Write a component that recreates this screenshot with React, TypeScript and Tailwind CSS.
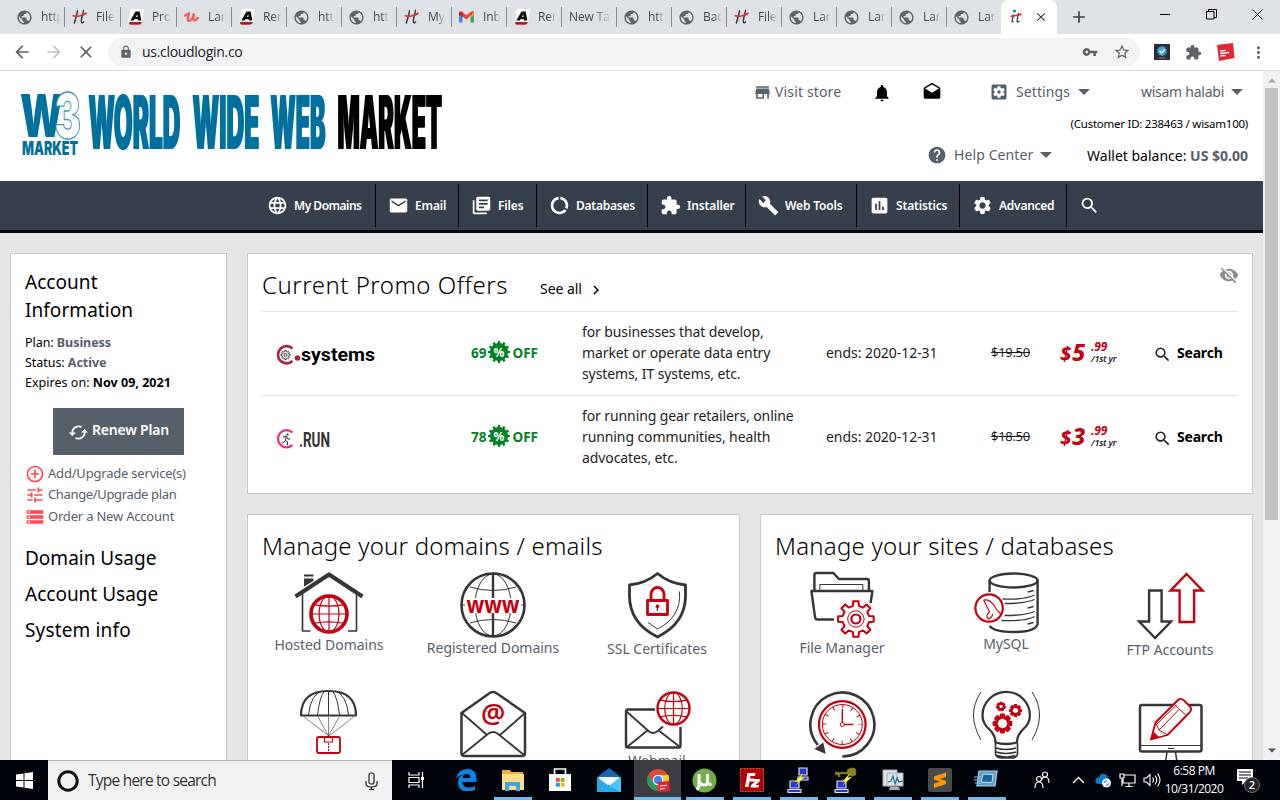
import type { ReactNode } from "react";
import {
  MdArrowBack, MdArrowForward, MdClose, MdLock, MdVpnKey, MdStarBorder, MdMoreVert, MdExtension, MdPublic, MdAdd,
  MdLanguage, MdEmail, MdLibraryBooks, MdDataUsage, MdBuild, MdAssessment, MdSettings, MdSearch, MdStore,
  MdNotifications, MdDrafts, MdSettingsApplications, MdHelp, MdVisibilityOff, MdControlPoint, MdTune, MdStorage,
  MdCached, MdChevronRight,
} from "react-icons/md";

const INK = "#363636";
const RED = "#c4000f";

/* ---------- shared drawing helpers ---------- */

function gearPath(cx: number, cy: number, outer: number, inner: number, teeth: number) {
  const step = (Math.PI * 2) / teeth;
  const pts: string[] = [];
  for (let i = 0; i < teeth; i++) {
    const a = i * step - Math.PI / 2;
    const at = (r: number, k: number) =>
      `${(cx + r * Math.cos(a + k * step)).toFixed(2)} ${(cy + r * Math.sin(a + k * step)).toFixed(2)}`;
    pts.push(at(inner, -0.28), at(outer, -0.19), at(outer, 0.19), at(inner, 0.28));
  }
  return "M" + pts.join("L") + "Z";
}

/* ---------- browser chrome ---------- */

function HLogo() {
  return (
    <svg width="15" height="16" viewBox="0 0 15 16" fill="none">
      <path d="M5 1.500c1 .2 0 3-.8 6S2.500 14 2 14.500M11 1c1 .5 0 3-.8 6s-1.200 6.500-.2 6.800 1.200-.6 1.800-1.500" stroke="#35363a" strokeWidth="1.500" />
      <path d="M.5 6.500c4 1.500 10 .5 14-2.500" stroke="#e8252f" strokeWidth="1.600" />
    </svg>
  );
}

function ALogo() {
  return (
    <svg width="16" height="16" viewBox="0 0 16 16">
      <path d="M3 0h12q1 0 .8 1l-1.800 11q-.3 3.500-3.500 3.500h-9q-1.500 0-1-2l2-12Q1.700 0 3 0Z" fill="#fff" />
      <path d="M1 13h12.800q-.5 2.700-3.300 2.700h-8Q1 15.700 1 13Z" fill="#b5121b" />
      <path fillRule="evenodd" d="M7.500 2.500h4.200l1.600 9h-3.500l-.2-1.400H6.700L5.900 11.500H2.300Zm1.800 2.700L7.800 8h1.700Z" fill="#0b0b0b" />
    </svg>
  );
}

function ULogo() {
  return (
    <svg width="15" height="15" viewBox="0 0 15 15" fill="none">
      <path d="M1 5.500c2.500-.5 3-2 4-2-.5 2.500-2.500 7.500 0 7.500 2.800 0 4.500-5.500 5-7.500-.7 3.500-1.500 6.500.3 7 1.200 0 2.500-1.200 3.400-2.500" stroke="#f0585c" strokeWidth="2.300" strokeLinecap="round" />
    </svg>
  );
}

function GmailLogo() {
  return (
    <svg width="15" height="12" viewBox="0 0 15 12">
      <path d="M0 2v9.500h3.500V5Z" fill="#4285f4" />
      <path d="M15 2v9.500h-3.500V5Z" fill="#34a853" />
      <path d="M11.500 2 15 1v2.500l-3.500 3Z" fill="#fbbc04" />
      <path d="M0 1.500C0 0 2 0 3 .8l4.500 3.500L12 .8c1-.8 3-.8 3 .7L7.500 8.500 0 3Z" fill="#ea4335" />
      <path d="M0 1.500V3.800l3.500 2.500V1Z" fill="#c5221f" />
    </svg>
  );
}

type Fav = "globe" | "h" | "a" | "u" | "gmail" | "none";
const TABS: [Fav, string][] = [
  ["globe", "http"], ["h", "File"], ["a", "Pro"], ["u", "Lar"], ["a", "Rer"], ["globe", "htt"], ["globe", "htt"], ["h", "My"],
  ["gmail", "Inb"], ["a", "Rer"], ["none", "New Tab"], ["globe", "htt"], ["globe", "Bac"], ["h", "File"], ["globe", "Lar"],
  ["globe", "Lar"], ["globe", "Lar"], ["globe", "Lar"],
];

function Favicon({ kind }: { kind: Fav }) {
  if (kind === "globe") return <MdPublic size={17} color="#5f6368" className="-ml-px" />;
  if (kind === "h") return <HLogo />;
  if (kind === "a") return <ALogo />;
  if (kind === "u") return <ULogo />;
  return <GmailLogo />;
}

function TabStrip() {
  return (
    <div className="flex h-[34px] items-end bg-[#dee1e6] pl-[10px]">
      {TABS.map(([kind, label], i) => (
        <div key={i} className={`flex h-[34px] shrink-0 items-center ${i === 1 || i === 2 ? "w-14" : "w-[55px]"}`}>
          <div className={`flex h-5 w-full items-center pl-[7px] ${i < 17 ? "border-r border-[#8a8d91]" : ""}`}>
            {kind !== "none" && <span className="flex w-[24px] shrink-0"><Favicon kind={kind} /></span>}
            <span className="mr-1 overflow-hidden whitespace-nowrap text-[12px] tracking-[-0.100px] text-[#45484d] [mask-image:linear-gradient(to_right,#000_55%,transparent)]">{label}</span>
          </div>
        </div>
      ))}
      <div className="-ml-px flex h-[34px] w-[56px] items-center rounded-t-lg bg-white pl-[9px]">
        <svg width="12" height="16" viewBox="0 0 12 16" fill="none">
          <circle cx="4.500" cy="2" r="1.500" fill="#1a73e8" />
          <path d="M3.500 5.500 2 12q0 1.500 1.500.5M8.500 4 7 12q0 2 2.500 0" stroke="#3c4043" strokeWidth="1.300" />
          <path d="M.5 7.500C4 6.500 8 7 11.500 5" stroke="#e8252f" strokeWidth="1.500" />
        </svg>
        <MdClose size={14} className="ml-[12px]" color="#3c4043" />
      </div>
      <div className="flex h-[34px] flex-1 items-center">
        <MdAdd size={20} className="ml-[12px]" color="#3c4043" />
        <span className="-mt-[5px] ml-[71px] h-px w-[10px] bg-black" />
        <svg className="ml-[36px] -mt-[6px]" width="11" height="11" viewBox="0 0 11 11" fill="none" stroke="#000">
          <path d="M.5 2.500h7.500v7.500H.5ZM2.500 2.500V.5h8v8H8" />
        </svg>
        <svg className="ml-[35px] -mt-[6px]" width="11" height="11" viewBox="0 0 11 11" stroke="#000"><path d="m.5.5 10 10M10.500.5l-10 10" /></svg>
      </div>
    </div>
  );
}

function Toolbar() {
  return (
    <div className="flex h-9 items-center bg-white">
      <MdArrowBack size={20} className="ml-[12px]" color="#5f6368" />
      <MdArrowForward size={20} className="ml-[12px]" color="#bdc1c6" />
      <MdClose size={20} className="ml-[12px]" color="#5f6368" />
      <div className="ml-[12px] flex h-7 w-[1032px] items-center rounded-full bg-[#f1f3f4]">
        <MdLock size={14} className="ml-[11px]" color="#5f6368" />
        <span className="ml-[9px] w-[940px] text-[14px] leading-5 tracking-[-0.300px] text-[#202124]">us.cloudlogin.co</span>
        <MdVpnKey size={16} color="#5f6368" />
        <MdStarBorder size={18} className="ml-[15px]" color="#5f6368" />
      </div>
      <svg className="ml-[14px]" width="16" height="16" viewBox="0 0 16 16">
        <rect width="16" height="16" fill="#2c3036" />
        <path d={gearPath(8, 7, 5, 4.5, 10)} fill="#3ba0dc" />
        <path d="m5.500 7 2 2 3-3.500" stroke="#fff" strokeWidth="1.300" fill="none" />
        <path d="M5 14h6" stroke="#888" />
      </svg>
      <MdExtension size={17} className="ml-[15px]" color="#5f6368" />
      <svg className="ml-[15px]" width="18" height="18" viewBox="0 0 18 18">
        <path d="m0 2 16-2 1.500 15L2 18Z" fill="#e2262f" />
        <path d="m3 8 6-.6M3.200 10.500l9-1M3.500 13l5-.5" stroke="#fff" strokeWidth="1.300" />
      </svg>
      <MdMoreVert size={19} className="ml-[14px]" color="#5f6368" />
    </div>
  );
}

/* ---------- site header ---------- */

function Brand() {
  return (
    <svg className="mt-[19px] ml-[18px] shrink-0" width="428" height="68" viewBox="18 90 428 68" fontFamily="Inter, Roboto, 'Liberation Sans', sans-serif" fontWeight="900">
      <g fill="#00709f">
        <text x="20" y="137" fontSize="59" textLength="43" lengthAdjust="spacingAndGlyphs">W</text>
        <text x="22" y="155" fontSize="19" textLength="56" lengthAdjust="spacingAndGlyphs">MARKET</text>
        <text x="54.500" y="138" fontSize="62" textLength="26.500" lengthAdjust="spacingAndGlyphs" fill="#fff" stroke="#3f93b8" strokeWidth="1.300">3</text>
        <g fontSize="74" className="drop-shadow-[1px_0_0_#00709f]">
          <text x="88" y="149" textLength="92" lengthAdjust="spacingAndGlyphs">WORLD</text>
          <text x="192" y="149" textLength="67" lengthAdjust="spacingAndGlyphs">WIDE</text>
          <text x="270" y="149" textLength="55" lengthAdjust="spacingAndGlyphs">WEB</text>
        </g>
      </g>
      <text x="337" y="149" fontSize="74" textLength="104.500" lengthAdjust="spacingAndGlyphs" className="drop-shadow-[1px_0_0_#000]">MARKET</text>
    </svg>
  );
}

function Caret({ className = "" }: { className?: string }) {
  return <svg className={`shrink-0 ${className}`} width="12" height="6" viewBox="0 0 12 6"><path d="M0 0h12L6 6Z" fill="#56606b" /></svg>;
}

function Header() {
  return (
    <header className="flex h-[110px] bg-white text-[14px] whitespace-nowrap text-[#56606b]">
      <Brand />
      <div className="ml-auto w-[510px] pt-[11px] pr-[15px]">
        <div className="flex h-5 items-center">
          <MdStore size={19} />
          <span className="-mt-[2px] ml-[3px] w-[97px] tracking-[0.150px]">Visit store</span>
          <MdNotifications size={20} className="mt-0.5" color="#000" />
          <MdDrafts size={20} className="ml-[30px]" color="#000" />
          <MdSettingsApplications size={20} className="ml-[47px]" />
          <span className="-mt-[2px] ml-[7px] w-[62px] tracking-[0.100px]">Settings</span>
          <Caret />
          <span className="-mt-px ml-auto tracking-[-0.250px]">wisam halabi</span>
          <Caret className="ml-[7px] mr-[5px]" />
        </div>
        <div className="mt-[12px] text-right text-[11.500px] leading-5 tracking-[-0.250px] text-black">(Customer ID: 238463 / wisam100)</div>
        <div className="mt-[11px] flex h-5 items-center justify-end">
          <MdHelp size={20} />
          <span className="-mt-[2px] ml-[7px] w-[86px] tracking-[0.100px]">Help Center</span>
          <Caret />
          <span className="ml-[35px] w-[161px] text-right text-[14px] text-black">
            Wallet balance: <b className="text-[#56606b]">US $0.00</b>
          </span>
        </div>
      </div>
    </header>
  );
}

function NavItem({ icon, label, className }: { icon: ReactNode; label?: string; className: string }) {
  return (
    <div className={`flex h-[43px] items-center ${className}`}>
      {icon}
      {label && <span className="ml-[6px]">{label}</span>}
    </div>
  );
}

function Nav() {
  const cell = "border-r border-black";
  return (
    <nav className="flex h-[52px] border-b-[3px] border-[#04070a] bg-[#35404c] pt-[3px] pl-[255px] text-[12px] font-semibold tracking-[-0.150px] whitespace-nowrap text-white">
      <NavItem icon={<MdLanguage size={21} />} label="My Domains" className={`w-[121px] pl-[12px] tracking-[-0.500px] ${cell}`} />
      <NavItem icon={<MdEmail size={21} />} label="Email" className={`w-[83px] pl-[12px] ${cell}`} />
      <NavItem icon={<MdLibraryBooks size={21} />} label="Files" className={`w-[78px] pl-[12px] ${cell}`} />
      <NavItem icon={<MdDataUsage size={21} />} label="Databases" className={`w-[111px] pl-[12px] tracking-[-0.250px] ${cell}`} />
      <NavItem icon={<MdExtension size={21} />} label="Installer" className={`w-[98px] pl-[12px] ${cell}`} />
      <NavItem icon={<MdBuild size={21} />} label="Web Tools" className={`w-[111px] pl-[12px] ${cell}`} />
      <NavItem icon={<MdAssessment size={21} />} label="Statistics" className={`w-[103px] pl-[12px] ${cell}`} />
      <NavItem icon={<MdSettings size={21} />} label="Advanced" className={`w-[107px] pl-[12px] tracking-[-0.250px] ${cell}`} />
      <NavItem icon={<MdSearch size={21} />} className="w-[50px] pl-[12px]" />
    </nav>
  );
}

/* ---------- sidebar ---------- */

function Sidebar() {
  return (
    <aside className="h-[520px] w-[217px] shrink-0 border border-[#c8c8c8] bg-white pt-[14px] pl-[14px] whitespace-nowrap text-black">
      <h2 className="text-[19px] leading-7 tracking-[0.050px]">Account<br />Information</h2>
      <div className="mt-[9px] text-[12.500px] leading-5 tracking-[-0.050px]">
        <div>Plan: <b className="text-[#56606b]">Business</b></div>
        <div>Status: <b className="text-[#56606b]">Active</b></div>
        <div className="tracking-[0.020px]">Expires on: <b>Nov 09, 2021</b></div>
      </div>
      <button className="mt-[15px] ml-7 flex h-[47px] w-[131px] items-center bg-[#56606b] pl-[15px] text-[14px] font-semibold text-white">
        <MdCached size={21} className="mt-0.5" />
        <span className="-mt-1 ml-[3px] tracking-[-0.200px]">Renew Plan</span>
      </button>
      <div className="mt-2 text-[13px] text-[#56606b]">
        <div className="flex h-[21px] items-center"><MdControlPoint size={20} color="#ff4850" /><span className="ml-[3px] tracking-[-0.200px]">Add/Upgrade service(s)</span></div>
        <div className="flex h-[22px] items-center"><MdTune size={20} color="#ff4850" /><span className="ml-[3px] tracking-[-0.350px]">Change/Upgrade plan</span></div>
        <div className="flex h-[22px] items-center"><MdStorage size={20} color="#ff4850" /><span className="ml-[3px] tracking-[-0.200px]">Order a New Account</span></div>
      </div>
      <div className="mt-3 text-[19px] leading-9">
        <h2>Domain Usage</h2>
        <h2>Account Usage</h2>
        <h2 className="tracking-[0.150px]">System info</h2>
      </div>
    </aside>
  );
}

/* ---------- promo table ---------- */

function SystemsLogo() {
  return (
    <svg width="102" height="26" viewBox="277 342 102 26">
      <path d="M293.500 348.500a8.600 8.600 0 1 0 0 12.500" fill="none" stroke="#b01f3c" strokeWidth="2.600" />
      <path d={gearPath(286.500, 355, 4.600, 3.500, 8)} fill="none" stroke="#333" />
      <circle cx="286.500" cy="355" r="1.500" fill="none" stroke="#333" />
      <circle cx="298.500" cy="358" r="2.800" fill="#b01f3c" />
      <text x="302" y="361" fontSize="18.500" fontWeight="700" fontFamily="Roboto, sans-serif" textLength="74" lengthAdjust="spacingAndGlyphs">systems</text>
    </svg>
  );
}

function RunLogo() {
  return (
    <svg width="102" height="26" viewBox="277 426 102 26">
      <path d="M293.500 432.500a8.600 8.600 0 1 0 0 12.500" fill="none" stroke="#ec2a86" strokeWidth="2.300" />
      <circle cx="288.500" cy="434.500" r="1.100" fill="#222" />
      <path d="m284 437 3-1 2 3h2M287 437l-.5 4-3.500 2.500M287 440.500l1.500 1.500v3" stroke="#222" fill="none" />
      <text x="300" y="446.500" fontSize="20" fontWeight="700" fontFamily="Roboto, sans-serif" textLength="31" lengthAdjust="spacingAndGlyphs" fill="#333">.RUN</text>
    </svg>
  );
}

function Promo({ logo, off, text, was, now }: { logo: ReactNode; off: string; text: string[]; was: string; now: string }) {
  return (
    <div className="grid h-[84px] grid-cols-[209px_111px_244px_164px_70px_95px_1fr] items-center border-t border-[#e2e2e2] pb-[2px] text-[14px] leading-[21px] whitespace-nowrap text-[#1c1c1c]">
      <div className="pl-[14px] pt-1">{logo}</div>
      <div className="flex items-center pt-px text-[13.500px] font-bold text-[#038225]">
        {off}
        <svg className="mx-[2px] -mt-[2px]" width="22" height="22" viewBox="0 0 22 22">
          <path d={gearPath(11, 11, 11, 9, 12)} fill="#038225" />
          <text x="11" y="15.500" fontSize="12" textAnchor="middle" fill="#fff" fontWeight="700">%</text>
        </svg>
        OFF
      </div>
      <div className="tracking-[-0.100px]">{text.map((t) => <div key={t}>{t}</div>)}</div>
      <div className="tracking-[-0.050px]">ends: 2020-12-31</div>
      <div className="pl-px text-[13px] tracking-[-0.300px] line-through">{was}</div>
      <div className="flex items-center pt-px text-[#c4000f] italic">
        <span className="flex w-[28px] items-baseline font-extrabold"><span className="text-[20px]">$</span><span className="ml-px text-[23px]">{now}</span></span>
        <span className="-mt-0.5 ml-[3px] flex flex-col leading-[12px]">
          <b className="text-[12px] tracking-[-0.100px]">.99</b>
          <span className="text-[9px] leading-[11px] font-semibold tracking-[-0.200px] text-[#222]">/1st yr</span>
        </span>
      </div>
      <div className="flex items-center">
        <MdSearch size={19} className="-ml-[2px] mt-[3px]" color="#222" />
        <b className="ml-[5px] tracking-[-0.200px] text-black">Search</b>
      </div>
    </div>
  );
}

function Promos() {
  return (
    <section className="h-[241px] border border-[#c8c8c8] bg-white px-[14px]">
      <div className="flex h-[57px] items-start whitespace-nowrap text-black">
        <h1 className="w-[278px] pt-[13px] text-[24px] leading-9 font-light tracking-[0.500px]">Current Promo Offers</h1>
        <span className="pt-[25px] text-[14px] leading-5 tracking-[-0.050px]">See all</span>
        <MdChevronRight size={18} className="ml-[5px] mt-[27px]" />
        <MdVisibilityOff size={20} className="ml-auto mt-[11px] -mr-px" color="#8b8b8b" />
      </div>
      <Promo logo={<SystemsLogo />} off="69" text={["for businesses that develop,", "market or operate data entry", "systems, IT systems, etc."]} was="$19.50" now="5" />
      <Promo logo={<RunLogo />} off="78" text={["for running gear retailers, online", "running communities, health", "advocates, etc."]} was="$18.50" now="3" />
    </section>
  );
}

/* ---------- shortcut tiles ---------- */

function Tile({ x, y, h, label, children }: { x: number; y: number; h: number; label: string; children: ReactNode }) {
  return (
    <div className="flex h-[118px] flex-col items-center text-[14px] leading-5 tracking-[-0.020px] whitespace-nowrap text-[#56606b]">
      <svg className="shrink-0" width="80" height={h} viewBox={`${x - 40} ${y} 80 ${h}`} fill="none" strokeLinejoin="round">{children}</svg>
      <span>{label}</span>
    </div>
  );
}

function RedGlobe({ cx, cy, r, w }: { cx: number; cy: number; r: number; w: number }) {
  const k = r * 0.52;
  return (
    <g stroke={RED} strokeWidth="1.200">
      <circle cx={cx} cy={cy} r={r} strokeWidth={w} />
      <ellipse cx={cx} cy={cy} rx={r * 0.55} ry={r} />
      <path d={`M${cx} ${cy - r}v${2 * r}M${cx - r} ${cy}h${2 * r}`} />
      <path d={`M${cx - r * 0.85} ${cy - k}q${r * 0.85} 3 ${r * 1.7} 0M${cx - r * 0.85} ${cy + k}q${r * 0.85} -3 ${r * 1.7} 0`} />
    </g>
  );
}

function DomainsCard() {
  return (
    <section className="h-[300px] w-[493px] overflow-hidden border border-[#c8c8c8] bg-white">
      <h1 className="h-[56px] pt-[13px] pl-[14px] text-[24px] leading-9 font-light tracking-[0.200px] whitespace-nowrap text-black">Manage your domains / emails</h1>
      <div className="grid grid-cols-[162px_166px_162px]">
        <Tile x={329} y={571} h={64} label="Hosted Domains">
          <path d="M295.500 596.500 329 574.500l33.500 22" stroke={INK} strokeWidth="4.200" />
          <path d="M304 574.500h9.500v2H304ZM304 578.500h9.500v2.500l-9.500 5.500Z" fill={INK} />
          <path d="M302.500 594v37h8M356.500 594v37h-8.500" stroke={INK} strokeWidth="1.600" />
          <RedGlobe cx={329} cy={614} r={18} w={3.600} />
        </Tile>
        <Tile x={493} y={571} h={67} label="Registered Domains">
          <g stroke={INK}>
            <circle cx="493" cy="605" r="31.500" strokeWidth="2.600" />
            <path d="M493 573v64" strokeWidth="2.400" />
            <ellipse cx="493" cy="605" rx="18" ry="31" />
            <path d="M470 587q23 7 46 0M470 623q23-7 46 0M461 605h64" />
          </g>
          <path d="M465 598h56v15h-56Z" fill="#fff" />
          <text x="466.500" y="612.500" fontSize="23" fontWeight="700" textLength="53" lengthAdjust="spacingAndGlyphs" fill={RED}>www</text>
        </Tile>
        <Tile x={657} y={571} h={68} label="SSL Certificates">
          <path d="M657.500 573.500q-12 10-28 11.500v11q0 27 28 41 28-14 28-41v-11q-16-1.500-28-11.500Z" stroke={INK} strokeWidth="2.800" />
          <path d="m648 622.500 9.500 6.500q24-12 22-37.500" stroke={INK} />
          <path d="M647.500 600.500h20v14h-20ZM651 600v-6a6.500 6.500 0 0 1 13 0v6" stroke={RED} strokeWidth="2.800" />
          <path d="M656.500 604.500h2l1 2.500-1.500 1v3h-1.200v-3l-1.500-1Z" fill={RED} />
        </Tile>
        <Tile x={329} y={689} h={67} label="Domain Backorder">
          <path d="M301 715.500q0-24.500 27.500-24.500T356 715.500Z" stroke={INK} strokeWidth="2.200" />
          <path d="M308.500 715q2-20 13-24M317.500 715q2-18 7-24M328.500 691v24M339.500 715q-2-18-7-24M348.500 715q-2-20-13-24" stroke={INK} />
          <path d="M304 717l25 19 24.500-19M318 717l10.500 19 10.500-19M328.500 717v19" stroke={INK} strokeWidth=".6" />
          <rect x="317" y="737" width="23" height="16" rx="2" stroke={RED} strokeWidth="1.800" />
          <path d="M324.500 737v5h8v-5" stroke={RED} strokeWidth="1.200" /><path d="M328.500 743v9" stroke={RED} strokeDasharray="2 1" />
        </Tile>
        <Tile x={493} y={689} h={72} label="Email Accounts">
          <path d="M461.500 713 489 693.500q4-3 8 0l28 19.500v40q0 3-3 3h-57.500q-3 0-3-3Z" stroke={INK} strokeWidth="2.500" />
          <path d="m462 713 25 22M525 713l-25 22M462 755l26.500-21.500q4.500-3 9 0L524 755" stroke={INK} strokeWidth="1.800" />
          <text x="493" y="723" fontSize="27" fontWeight="600" textAnchor="middle" fill={RED}>@</text>
        </Tile>
        <Tile x={657} y={689} h={62} label="Webmail">
          <path d="M655 709.500h-27q-2 0-2 2v34q0 2 2 2h51q1.500 0 1.500-2V727" stroke={INK} strokeWidth="2.400" />
          <path d="m626 711 23 20.500q4 3 8 0l6-5M627 747l21-17M680 747l-22-17" stroke={INK} strokeWidth="1.800" />
          <RedGlobe cx={673.500} cy={708.500} r={16} w={2.400} />
        </Tile>
      </div>
    </section>
  );
}

function SitesCard() {
  return (
    <section className="h-[300px] w-[493px] overflow-hidden border border-[#c8c8c8] bg-white">
      <h1 className="h-[56px] pt-[13px] pl-[14px] text-[24px] leading-9 font-light tracking-[0.250px] whitespace-nowrap text-black">Manage your sites / databases</h1>
      <div className="grid grid-cols-[162px_166px_162px]">
        <Tile x={842} y={571} h={67} label="File Manager">
          <g transform="translate(.9)">
            <path d="M813.500 590v-15q0-2 2-2h17l5.500 6H866q2 0 2 2v9" stroke={INK} strokeWidth="2.400" />
            <path d="M819 590v-5.500h43v5.500" stroke={INK} />
            <path d="M833 619.500h-16.500q-2 0-2.300-2L810.500 591h61l-1.800 12" stroke={INK} strokeWidth="2.400" />
            <path d={gearPath(855, 619, 18, 13.500, 8)} stroke={RED} strokeWidth="2" />
            <circle cx="855" cy="619" r="8.200" stroke={RED} strokeWidth="1" />
            <circle cx="855" cy="619" r="4.500" stroke={RED} strokeWidth="2.200" />
          </g>
        </Tile>
        <Tile x={1006} y={571} h={63} label="MySQL">
          <g transform="translate(3.600)">
            <g stroke={INK} strokeWidth="2.400">
              <ellipse cx="1010" cy="580.500" rx="24" ry="7" />
              <path d="M986 580v12M1034 580v44q-2 8-24 8-19 0-24-6" />
              <path d="M999 599q22 1 32-4M1001 603.500q21 0 30-4M1001 615.500q21 0 30-4M998 620.500q24 1 33-4" strokeWidth="1.300" />
              <path d="m1024 592 6-1.500M1024 608l6-1.500M1024 624l6-1.500" strokeWidth="1.500" />
            </g>
            <circle cx="985.500" cy="608" r="13.700" stroke={RED} strokeWidth="2.200" />
            <path d="M980 600q6-1 10 5t7 9M980 600l6 12-2 2q-2 3 1 5l3-2 1-3" stroke={RED} strokeWidth="1.100" />
          </g>
        </Tile>
        <Tile x={1170} y={571} h={69} label="FTP Accounts">
          <g transform="translate(5.600)">
            <path d="M1143.500 590.500h12.500V621.500h9.500L1149.500 638l-16-16.500h10Z" stroke={INK} strokeWidth="2.400" strokeLinejoin="miter" />
            <path d="m1181 574 16 16.500H1188.500V622h-14.500v-31.500h-9Z" stroke={RED} strokeWidth="2.400" strokeLinejoin="miter" />
          </g>
        </Tile>
        <Tile x={842} y={689} h={72} label="Cron Jobs">
          <g transform="translate(1.300)">
            <path d="M841 756.500a32 32 0 1 0-24.500-11.500" stroke={INK} strokeWidth="2.600" />
            <path d="m813 749 11.500 5-2.500-11.500Z" fill={INK} />
            <circle cx="841" cy="724.500" r="23.300" stroke={RED} strokeWidth="2.200" />
            <circle cx="841" cy="724.500" r="20" stroke={RED} strokeWidth="1" />
            <circle cx="841" cy="724.500" r="18" stroke={RED} strokeWidth="4" strokeDasharray="1 8.425" strokeDashoffset=".5" />
            <path d="M841 723v-14M843 724.500h9" stroke={RED} strokeWidth="1.400" />
            <circle cx="841" cy="724.500" r="2" stroke={RED} />
          </g>
        </Tile>
        <Tile x={1006} y={689} h={74} label="Web Apps">
          <path d="M992 741q0-7-6-13-7-6-7-14a23.700 23.700 0 0 1 47.400 0q0 8-7 14-6 6-6 13-10.700 3-21.400 0Z" stroke={INK} strokeWidth="2.300" transform="translate(3.500 1.500)" />
          <path d="M995.500 743v11q1 4 6 4h10q5 0 6-4v-11M996 748q10 3 20 0M996 752q10 3 20 0M997 755.500q10 3 18 0" stroke={INK} strokeWidth="1.700" />
          <path d="M981 692q-15 22 0 48M1032 692q15 22 0 48" stroke={INK} />
          <path d={gearPath(1001, 706.500, 4, 2.500, 7)} stroke={RED} strokeWidth="1.800" />
          <path d={gearPath(1015.5, 710.500, 5.500, 3.500, 8)} stroke={RED} strokeWidth="2" />
          <path d={gearPath(1002.500, 723.500, 8.500, 6, 8)} stroke={RED} strokeWidth="3" />
        </Tile>
        <Tile x={1170} y={689} h={80} label="Site Builder">
          <rect x="1140" y="705" width="61.500" height="46.500" rx="2" stroke={INK} strokeWidth="2.500" />
          <path d="M1141 745.500h60" stroke={INK} /><path d="M1168 748.500h6" stroke={INK} />
          <path d="M1167 752l-1.500 10M1175.500 752l1.500 10" stroke={INK} strokeWidth="1.500" />
          <path d="m1151 739.500 4.500-17L1178 700q2.500-2.500 6 .5l5.500 5.500q3 3 .5 6L1167.500 735Z" fill="#fff" stroke={RED} strokeWidth="1.800" />
          <path d="m1151 739.500 2.500-8 5.500 5.500Z" fill={RED} />
          <path d="m1155.500 722.500 3.500 7.500 8.500 5M1174 704l12 11.500M1159 730l20-20.500M1157 724l19.500-19" stroke={RED} />
        </Tile>
      </div>
    </section>
  );
}

/* ---------- taskbar ---------- */

function App48({ children, on = false, active = false }: { children: ReactNode; on?: boolean; active?: boolean }) {
  return (
    <div className={`flex h-10 w-[47px] flex-col items-center ${active ? "bg-[#3b3d42]" : ""}`}>
      <div className="flex h-[37px] items-center pt-[3px]">{children}</div>
      {on && <div className={`h-[3px] bg-[#76b9ed] ${active ? "w-full" : "w-[38px]"}`} />}
    </div>
  );
}

function PuttyIcon({ keyed = false }: { keyed?: boolean }) {
  return (
    <svg width="24" height="27" viewBox="0 0 24 27">
      {keyed ? <path d="M1 5h12v-2q4-4 9-1v6q-5 3-9-1H6v3H4V8H1Z" fill="#8c8422" stroke="#4f4a10" strokeWidth=".5" />
        : <path d="M12 1h8v7h-8ZM11 10h10v3H11Z" fill="#2336d8" stroke="#ddd" strokeWidth="1.200" />}
      <path d="M3 14h9v7H3ZM1 22.500h13v3H1Z" fill="#2336d8" stroke="#ddd" strokeWidth="1.200" />
      <path d="m16 6-8 9 4-1-4 5 10-9-4 .5Z" fill="#fdf12e" />
    </svg>
  );
}

function Taskbar() {
  return (
    <footer className="flex h-10 bg-[#01030a] text-white">
      <div className="flex w-12 items-center justify-center">
        <svg width="17" height="17" viewBox="0 0 17 17" fill="#fff"><path d="M0 2.500 7.500 1.500V8H0ZM8.500 1.300 17 0v8H8.500ZM0 9h7.500v6.500L0 14.500ZM8.500 9H17v8l-8.500-1.300Z" /></svg>
      </div>
      <div className="flex w-[344px] items-center border-t border-[#b5b5b5] bg-[#f1f1f1] pl-[9px]">
        <svg width="22" height="22" viewBox="0 0 22 22"><circle cx="11" cy="11" r="9.200" fill="none" stroke="#111" strokeWidth="3" /></svg>
        <span className="ml-[9px] text-[15.500px] tracking-[-0.770px] text-[#333]">Type here to search</span>
        <svg className="ml-auto mr-[14px]" width="13" height="18" viewBox="0 0 13 18" fill="none" stroke="#222" strokeWidth="1.200"><rect x="4" y="1" width="5" height="11" rx="2" /><path d="M1 9v3q0 3 5.500 3T12 12V9M6.500 15v2.500M4 17.300h5" /></svg>
      </div>
      <div className="flex w-[48px] items-center justify-center">
        <svg width="17" height="16" viewBox="0 0 17 16" fill="none" stroke="#fff" strokeWidth="1.200"><path d="M1 0v3h10V0M1 5.500h10v5H1ZM1 16v-3h10v3M14.500 0v16" /><path d="M13 5h3v3h-3Z" fill="#fff" stroke="none" /></svg>
      </div>
      <div className="ml-[2px] flex w-[195px]">
        <App48>
          <svg width="22" height="22" viewBox="0 0 22 22"><path d="M1 10Q3 0 12 0q9.500 0 9.500 9.500V13H7.500q0 5.500 6.500 5.500 4 0 6-1.500v4q-3 1.500-7.500 1.500-9.500 0-9.500-9Q3 8 8 5.500 3 6.500 1 10Zm6.700-1h7.600q0-4-3.800-4T7.700 9Z" fill="#0b83e0" /></svg>
        </App48>
        <App48 on>
          <svg width="24" height="22" viewBox="0 0 24 22"><path d="M1 1h8l1.500 2H22v18H1Z" fill="#e7b23d" /><path d="M1 5h22v16H1Z" fill="#fcdf8c" /><path d="M4 22v-9h15v9h-4v-5H8v5Z" fill="#3ba7db" /></svg>
        </App48>
        <App48>
          <svg width="24" height="24" viewBox="0 0 24 24"><path d="M6.500 7V1h11v6" stroke="#fff" strokeWidth="1.700" fill="none" /><path d="M1 6h22v17H1Z" fill="#fff" /><path d="M8 10h3.800v3.800H8Z" fill="#e8503a" /><path d="M12.800 10h3.800v3.800h-3.800Z" fill="#7fba00" /><path d="M8 14.800h3.800v3.800H8Z" fill="#2196e0" /><path d="M12.800 14.800h3.800v3.800h-3.800Z" fill="#fbb40a" /></svg>
        </App48>
        <App48>
          <svg className="ml-[5px]" width="24" height="24" viewBox="0 0 24 24"><path d="m0 9 12-9 12 9v15H0Z" fill="#0f6bb5" /><path d="M2 9h20v8H2Z" fill="#f5f8fb" /><path d="m0 9 12 9 12-9v15H0Z" fill="#29a7e8" /><path d="m24 9-12 9 12 6Z" fill="#4dc3f7" /></svg>
        </App48>
      </div>
      <div className="-ml-[3px] flex w-[376px]">
        <App48 on active>
          <svg width="24" height="24" viewBox="0 0 24 24"><circle cx="12" cy="12" r="11" fill="#dd4b39" /><path d="M2 7.500 8 15l5 7.500Q1 22 1 11Z" fill="#1da15f" /><path d="M13 7h9.500q3 9-9.500 16l3-8Z" fill="#fcc934" /><circle cx="12" cy="12" r="5.200" fill="#fff" /><circle cx="12" cy="12" r="4.200" fill="#4285f4" /><path d="m12 14 11-1 1 10-11 1Z" fill="#e2262f" /><path d="m14 18 7-.7M14 21l5-.5" stroke="#fff" /></svg>
        </App48>
        <App48 on>
          <svg width="25" height="25" viewBox="0 0 25 25"><circle cx="12.500" cy="12.500" r="12" fill="#70b144" /><path d="M7 6v11q0 3-2.500 4.500M7.500 14q1 3 4.500 3t3.500-3V6v8q0 3 4 2" stroke="#fff" strokeWidth="3" fill="none" /></svg>
        </App48>
        <App48 on>
          <svg width="24" height="24" viewBox="0 0 24 24"><rect x=".5" y=".5" width="23" height="23" fill="#b30000" stroke="#d94c4c" strokeDasharray="2 1" /><path d="M5 19 7.500 5h8l-.5 3h-4.500l-.4 2.500h3.900l-.5 3H9.500L8.500 19ZM12 11h8l-.4 2.500L15.500 17H19l-.5 2.500h-8L11 17l4-3.500h-3.500Z" fill="#fff" /></svg>
        </App48>
        <App48 on><PuttyIcon /></App48>
        <App48 on><PuttyIcon keyed /></App48>
        <App48 on>
          <svg width="25" height="24" viewBox="0 0 25 24"><path d="M3 2h14v16H3ZM7 5h16v13H7Z" fill="#dfe3e6" stroke="#aab0b4" /><path d="m8 14 3-1 2-5 2 8 2-6 2 4 4-1" stroke="#1a75ad" strokeWidth="1.200" fill="none" /><path d="M10 19h9l1 3H9Z" fill="#a7adb1" /></svg>
        </App48>
        <App48 on>
          <svg width="24" height="24" viewBox="0 0 24 24"><rect width="24" height="24" rx="2" fill="#4b4b4b" /><path d="m6 8.500 12-4v4.500l-6 2 6 2v3L6 20v-4.500l6-2-6-2Z" fill="#ff9800" /></svg>
        </App48>
        <App48 on>
          <svg width="25" height="22" viewBox="0 0 25 22"><path d="M5 2h18l-2 15H3Z" fill="#5a9fc8" stroke="#a7d4ee" strokeWidth="1.200" /><path d="m9 5 10 .5-1 8-11-.5Z" fill="#1a6499" stroke="#c6e6f7" /><path d="M0 8h8M0 11h8M1 14h6" stroke="#7dbce0" /></svg>
        </App48>
      </div>
      <div className="flex flex-1 items-center">
        <svg className="ml-[24px]" width="16" height="18" viewBox="0 0 16 18" fill="none" stroke="#fff" strokeWidth="1.200"><circle cx="5" cy="8" r="2.500" /><path d="M1 17q0-6 4-6t4 6" /><circle cx="11" cy="3.500" r="2.500" /><path d="M7.500 9q1-3 3.500-3 4 0 4 6" /></svg>
        <svg className="ml-[22px]" width="13" height="8" viewBox="0 0 13 8" fill="none" stroke="#fff" strokeWidth="1.300"><path d="m1 7 5.500-5.500L12 7" /></svg>
        <svg className="ml-[10px]" width="17" height="16" viewBox="0 0 17 16"><path d="M3 12q-4-1-2-5 1-2 3-1.500Q6 0 10 2q2.500 1 3 4 3 1 2 5 0 1-2 1Z" fill="#0b78d1" /><circle cx="11.500" cy="11" r="4.500" fill="#f5f5f5" /><path d="M9 11q.5-2.500 3-2.300M14 11q-.5 2.500-3 2.300" stroke="#1680d8" fill="none" /></svg>
        <svg className="ml-[7px]" width="17" height="16" viewBox="0 0 17 16" fill="none" stroke="#fff" strokeWidth="1.200"><path d="M5 3h11v8H4V7M10 11v3M6.500 14.500h7M1 2h4v4H1ZM3 6v8" /></svg>
        <svg className="ml-[7px]" width="18" height="16" viewBox="0 0 18 16" fill="none" stroke="#fff" strokeWidth="1.100"><path d="M1 6h2.500L7 2.500v11L3.500 10H1ZM9.500 5.500q2 2.500 0 5M12 3.500q3.500 4.500 0 9M14.500 1.500q5 6.500 0 13" /></svg>
        <div className="w-[66px] text-center text-[12px] leading-[18px] tracking-[-0.500px] whitespace-nowrap"><div>6:58 PM</div><div>10/31/2020</div></div>
        <div className="relative ml-[10px] h-6 w-6">
          <svg width="17" height="17" viewBox="0 0 17 17"><path d="M0 1h16v12H9l-4 4v-4H0Z" fill="#fff" /><path d="M2 4h12M2 7h12M2 10h9" stroke="#01030a" strokeWidth="1.200" /></svg>
          <span className="absolute top-[9px] left-[7px] flex h-[16px] w-[16px] items-center justify-center rounded-full border border-[#777] bg-[#222] text-[11px] font-semibold">2</span>
        </div>
      </div>
    </footer>
  );
}

export default function App() {
  return (
    <div className="flex h-[800px] w-[1280px] flex-col overflow-hidden font-['Noto_Sans','Open_Sans',sans-serif]">
      <div className="font-['Open_Sans','Noto_Sans',sans-serif]">
        <TabStrip />
        <Toolbar />
      </div>
      <div className="flex h-[690px] overflow-hidden border-t border-[#dadce0]">
        <div className="w-[1263px] bg-[#e5e5e5]">
          <Header />
          <Nav />
          <main className="flex gap-5 pt-5 pl-[10px]">
            <Sidebar />
            <div className="w-[1006px] shrink-0">
              <Promos />
              <div className="mt-5 flex gap-5">
                <DomainsCard />
                <SitesCard />
              </div>
            </div>
          </main>
        </div>
        <div className="flex w-[17px] flex-col items-center bg-[#f1f1f1]">
          <svg className="mt-[7px]" width="8" height="5" viewBox="0 0 8 5"><path d="M4 .5 8 4.500H0Z" fill="#a3a3a3" /></svg>
          <div className="mt-[5px] h-[432px] w-[13px] bg-[#c1c1c1]" />
          <svg className="mt-auto mb-[7px]" width="8" height="5" viewBox="0 0 8 5"><path d="M0 .5h8L4 4.500Z" fill="#505050" /></svg>
        </div>
      </div>
      <div className="font-['Open_Sans','Noto_Sans',sans-serif]"><Taskbar /></div>
    </div>
  );
}
